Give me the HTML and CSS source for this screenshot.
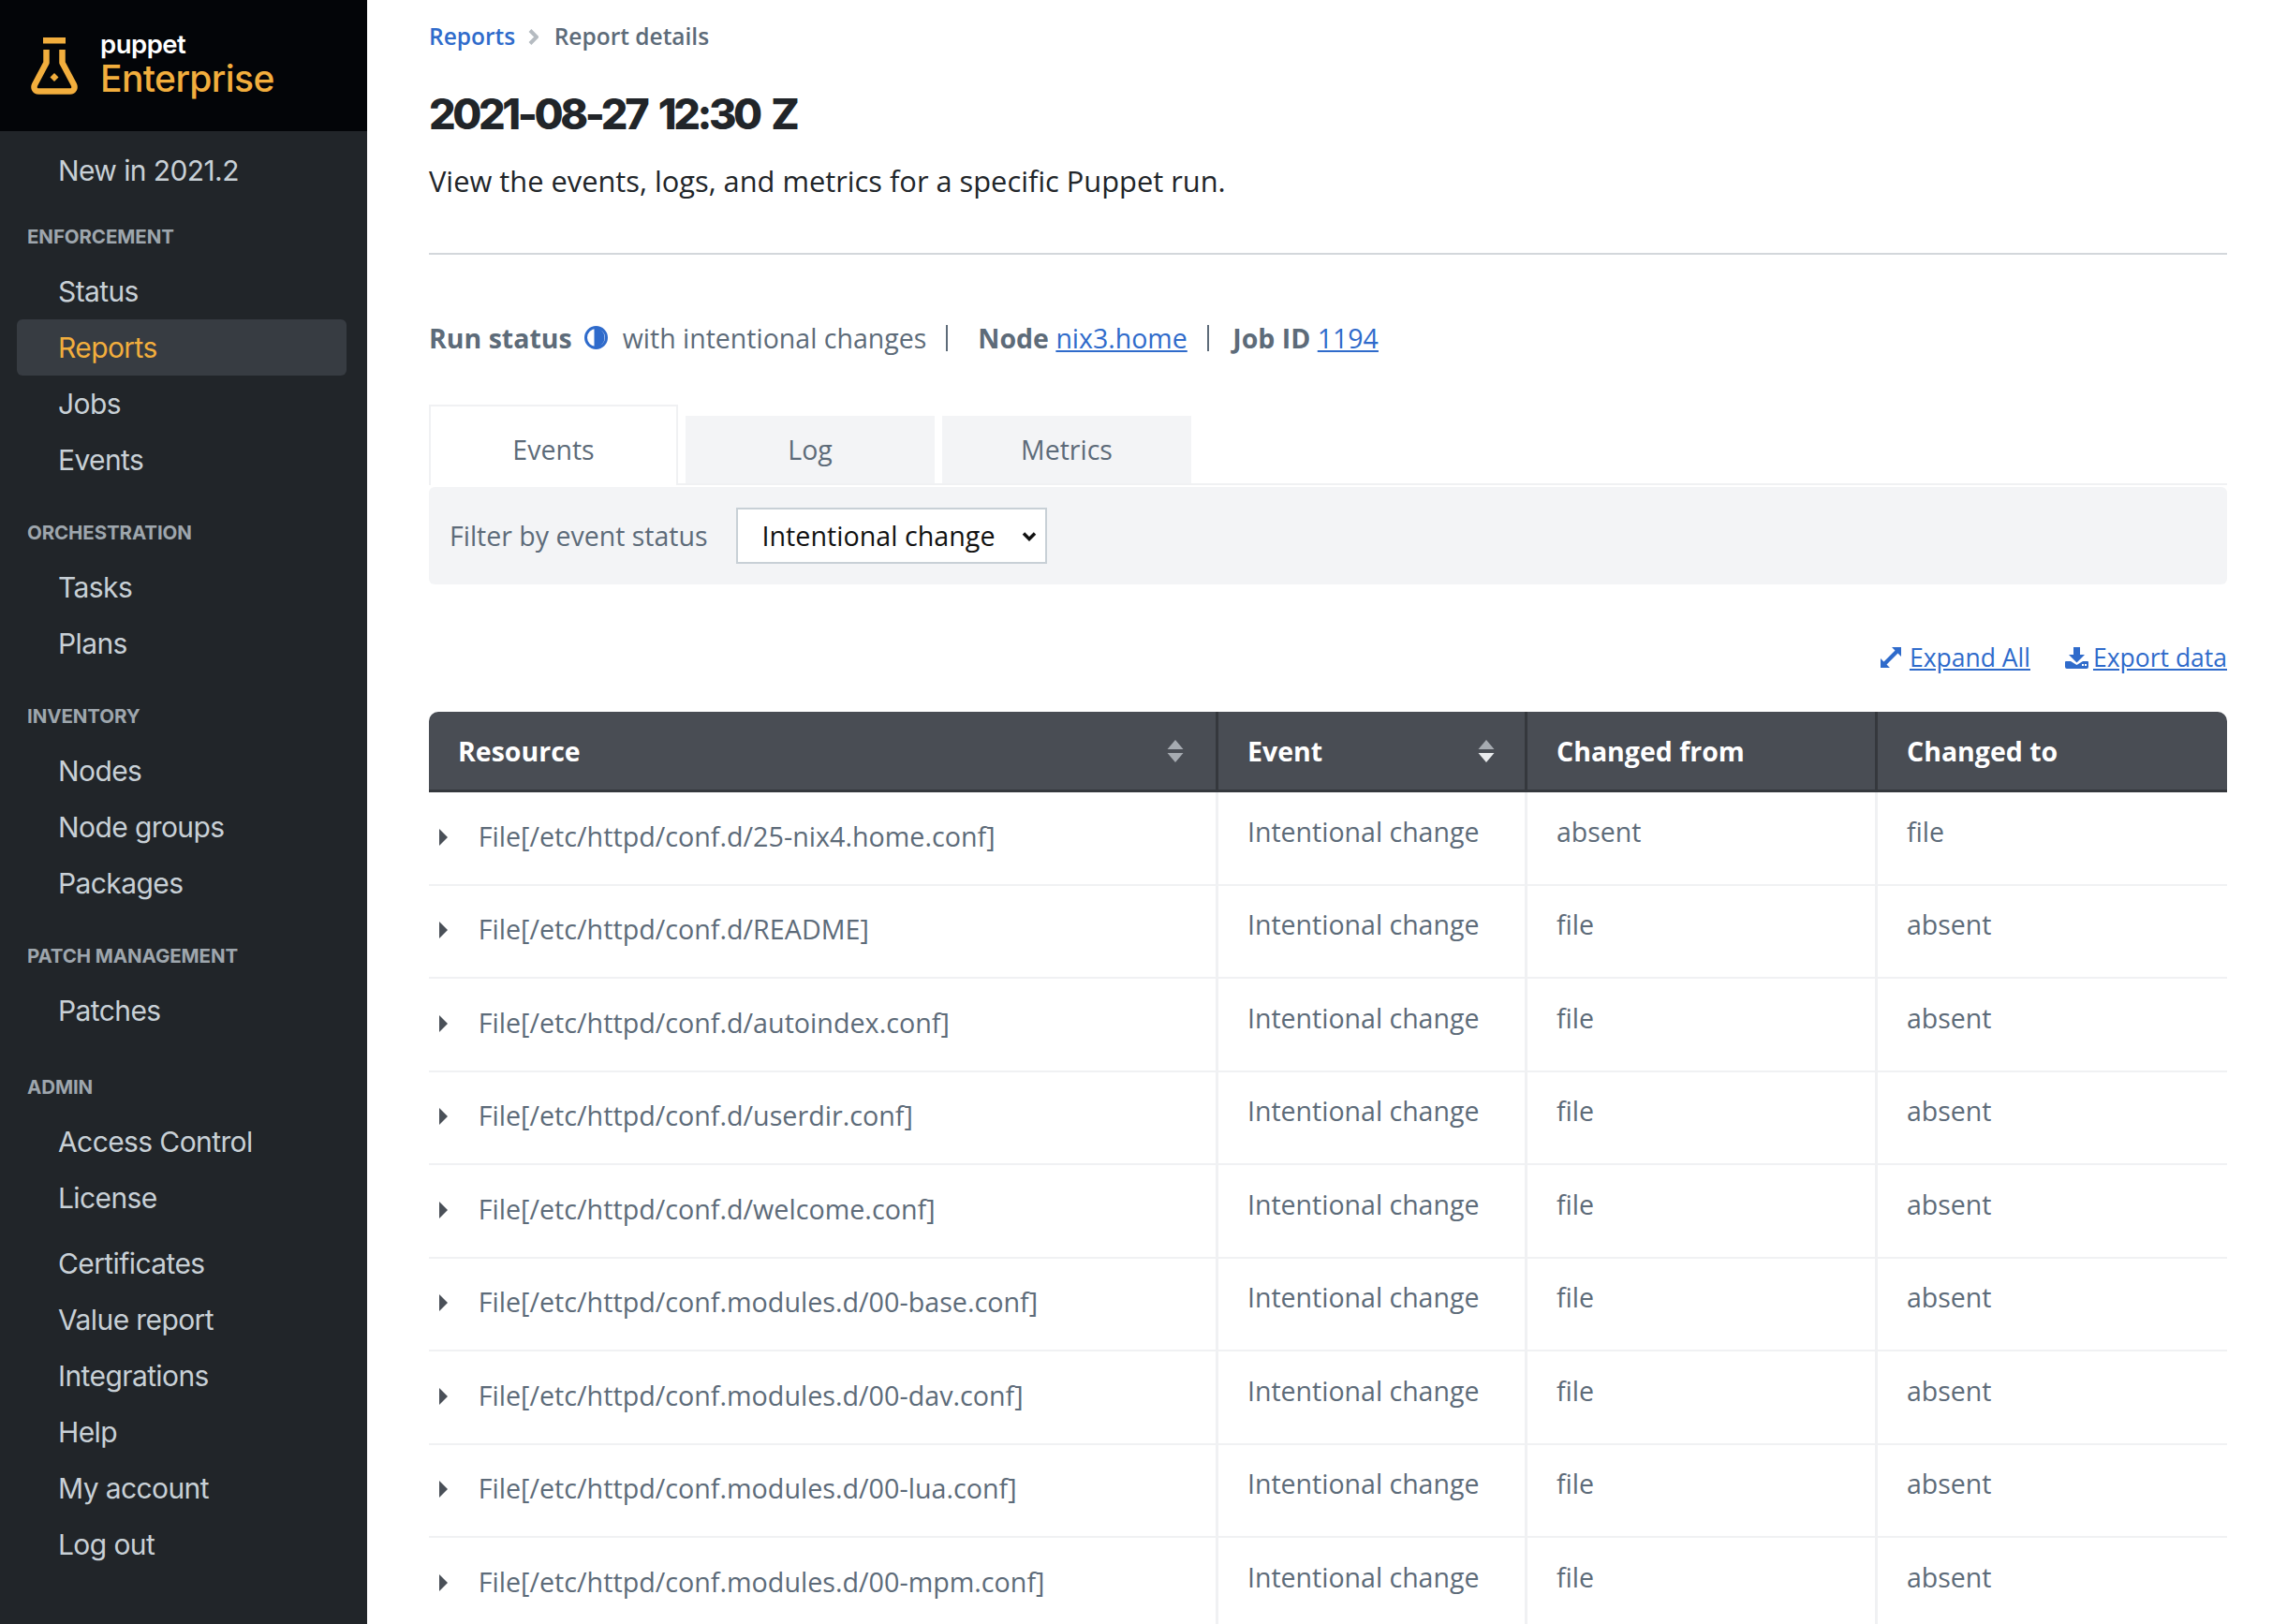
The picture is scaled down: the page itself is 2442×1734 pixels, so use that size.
FILE: index.html
```html
<!DOCTYPE html>
<html lang="en">
<head>
<meta charset="utf-8">
<title>Report details</title>
<link rel="stylesheet" href="styles.css">
</head>
<body>
<div class="app">
  <aside class="sidebar">
    <div class="brand">
      <svg class="flask" width="50" height="61" viewBox="0 0 50 61">
        <path fill="#f2ae3d" d="M13 0h24v6.500H13z"/>
        <path fill="none" stroke="#f2ae3d" stroke-width="6.500" stroke-linejoin="round" d="M16.500 13v14L4.300 50c-2 4 0 7.500 4 7.500h33.400c4 0 6-3.500 4-7.500L33.500 27V13"/>
        <path fill="#f2ae3d" d="M25 38l4.500 4.500-4.500 4.500-4.500-4.500z"/>
      </svg>
      <div class="brand-text">
        <div class="brand-top">puppet</div>
        <div class="brand-name">Enterprise</div>
      </div>
    </div>
    <nav class="nav">
      <a class="nav-item">New in 2021.2</a>
      <div class="nav-head first">ENFORCEMENT</div>
      <a class="nav-item">Status</a>
      <a class="nav-item active">Reports</a>
      <a class="nav-item">Jobs</a>
      <a class="nav-item">Events</a>
      <div class="nav-head">ORCHESTRATION</div>
      <a class="nav-item">Tasks</a>
      <a class="nav-item">Plans</a>
      <div class="nav-head">INVENTORY</div>
      <a class="nav-item">Nodes</a>
      <a class="nav-item">Node groups</a>
      <a class="nav-item">Packages</a>
      <div class="nav-head">PATCH MANAGEMENT</div>
      <a class="nav-item">Patches</a>
      <div class="nav-head admin">ADMIN</div>
      <a class="nav-item">Access Control</a>
      <a class="nav-item">License</a>
      <a class="nav-item spaced">Certificates</a>
      <a class="nav-item">Value report</a>
      <a class="nav-item">Integrations</a>
      <a class="nav-item">Help</a>
      <a class="nav-item">My account</a>
      <a class="nav-item">Log out</a>
    </nav>
  </aside>
  <main class="main">
    <div class="crumbs">
      <a class="crumb-link">Reports</a>
      <svg class="crumb-sep" width="11" height="17" viewBox="0 0 11 17"><path fill="none" stroke="#b5bbc1" stroke-width="4" d="M2 1.500l7 7-7 7"/></svg>
      <span class="crumb-current">Report details</span>
    </div>
    <h1 class="title">2021-08-27 12:30 Z</h1>
    <p class="lead">View the events, logs, and metrics for a specific Puppet run.</p>
    <hr class="rule">
    <div class="status">
      <b>Run status</b>
      <svg class="half" width="25" height="25" viewBox="0 0 25 25"><circle cx="12.500" cy="12.500" r="11" fill="#fff" stroke="#2f6bcb" stroke-width="3"/><path fill="#2f6bcb" d="M10.500 1.500a11 11 0 0 1 0 22z"/></svg>
      <span class="status-text">with intentional changes</span>
      <span class="pipe"></span>
      <b class="node">Node</b>&nbsp;<a class="link">nix3.home</a>
      <span class="pipe"></span>
      <b class="job">Job ID</b>&nbsp;<a class="link">1194</a>
    </div>
    <div class="tabs">
      <div class="tab current">Events</div>
      <div class="tab">Log</div>
      <div class="tab">Metrics</div>
    </div>
    <div class="filter">
      <label class="filter-label" for="st">Filter by event status</label>
      <div class="select-wrap">
        <select class="filter-select" id="st"><option>Intentional change</option></select>
        <svg class="select-arrow" width="16" height="12" viewBox="0 0 16 12"><path fill="none" stroke="#111" stroke-width="3.500" d="M2 2.500l6 6 6-6"/></svg>
      </div>
    </div>
    <div class="actions">
      <a class="action">
        <svg width="24" height="24" viewBox="0 0 24 24"><g fill="#2f6bcb"><path d="M13 1h10v10l-3.500-3.500L7.500 19.500 11 23H1V13l3.500 3.500 12-12z"/></g></svg>
        <span>Expand All</span>
      </a>
      <a class="action tight">
        <svg width="25" height="24" viewBox="0 0 25 24"><path fill="#2f6bcb" d="M9 1h7v8h5l-8.500 8.500L4 9h5zM1 16h5l6.500 4 6.500-4h5a1 1 0 0 1 1 1v5a2 2 0 0 1-2 2H2a2 2 0 0 1-2-2v-5a1 1 0 0 1 1-1z"/><path fill="#fff" d="M18 19h2v2h-2zM21 19h2v2h-2z"/></svg>
        <span>Export data</span>
      </a>
    </div>
    <table class="grid">
      <colgroup><col class="c1"><col class="c2"><col class="c3"><col class="c4"></colgroup>
      <thead>
        <tr>
          <th><div class="th-flex">Resource<svg class="sort" width="18" height="24" viewBox="0 0 18 24"><path fill="#a6abb1" d="M9 0l8.500 10H.5zM9 24L.5 14h17z"/></svg></div></th>
          <th><div class="th-flex">Event<svg class="sort sort-b" width="18" height="24" viewBox="0 0 18 24"><path fill="#a6abb1" d="M9 0l8.500 10H.5z"/><path fill="#e9ebed" d="M9 24L.5 14h17z"/></svg></div></th>
          <th>Changed from</th>
          <th>Changed to</th>
        </tr>
      </thead>
      <tbody>
        <tr><td class="res"><svg class="caret" width="9" height="18" viewBox="0 0 9 18"><path fill="#4a5058" d="M0 0l9 9-9 9z"/></svg>File[/etc/httpd/conf.d/25-nix4.home.conf]</td><td>Intentional change</td><td>absent</td><td>file</td></tr>
        <tr><td class="res"><svg class="caret" width="9" height="18" viewBox="0 0 9 18"><path fill="#4a5058" d="M0 0l9 9-9 9z"/></svg>File[/etc/httpd/conf.d/README]</td><td>Intentional change</td><td>file</td><td>absent</td></tr>
        <tr><td class="res"><svg class="caret" width="9" height="18" viewBox="0 0 9 18"><path fill="#4a5058" d="M0 0l9 9-9 9z"/></svg>File[/etc/httpd/conf.d/autoindex.conf]</td><td>Intentional change</td><td>file</td><td>absent</td></tr>
        <tr><td class="res"><svg class="caret" width="9" height="18" viewBox="0 0 9 18"><path fill="#4a5058" d="M0 0l9 9-9 9z"/></svg>File[/etc/httpd/conf.d/userdir.conf]</td><td>Intentional change</td><td>file</td><td>absent</td></tr>
        <tr><td class="res"><svg class="caret" width="9" height="18" viewBox="0 0 9 18"><path fill="#4a5058" d="M0 0l9 9-9 9z"/></svg>File[/etc/httpd/conf.d/welcome.conf]</td><td>Intentional change</td><td>file</td><td>absent</td></tr>
        <tr><td class="res"><svg class="caret" width="9" height="18" viewBox="0 0 9 18"><path fill="#4a5058" d="M0 0l9 9-9 9z"/></svg>File[/etc/httpd/conf.modules.d/00-base.conf]</td><td>Intentional change</td><td>file</td><td>absent</td></tr>
        <tr><td class="res"><svg class="caret" width="9" height="18" viewBox="0 0 9 18"><path fill="#4a5058" d="M0 0l9 9-9 9z"/></svg>File[/etc/httpd/conf.modules.d/00-dav.conf]</td><td>Intentional change</td><td>file</td><td>absent</td></tr>
        <tr><td class="res"><svg class="caret" width="9" height="18" viewBox="0 0 9 18"><path fill="#4a5058" d="M0 0l9 9-9 9z"/></svg>File[/etc/httpd/conf.modules.d/00-lua.conf]</td><td>Intentional change</td><td>file</td><td>absent</td></tr>
        <tr><td class="res"><svg class="caret" width="9" height="18" viewBox="0 0 9 18"><path fill="#4a5058" d="M0 0l9 9-9 9z"/></svg>File[/etc/httpd/conf.modules.d/00-mpm.conf]</td><td>Intentional change</td><td>file</td><td>absent</td></tr>
      </tbody>
    </table>
  </main>
</div>
</body>
</html>
```
FILE: styles.css
```css
* { box-sizing: border-box; }
html, body { margin: 0; height: 100%; overflow: hidden; background: #fff; }
body { font-family: "Open Sans", "Liberation Sans", sans-serif; color: #1f2428; }
.app { display: flex; height: 1734px; }
.sidebar { width: 392px; flex: none; background: #212529; font-family: Inter, "Liberation Sans", sans-serif; }
.brand { height: 140px; background: #030508; display: flex; align-items: center; padding: 0 0 0 33px; gap: 24px; }
.brand-text { margin-top: -2px; }
.brand-top { color: #fff; font-size: 27.500px; font-weight: 600; line-height: 30px; letter-spacing: -0.5px; }
.brand-name { color: #f2ae3d; font-size: 39px; font-weight: 500; line-height: 44px; letter-spacing: -0.6px; }
.nav { display: flex; flex-direction: column; padding: 12px 22px 0 18px; }
.nav-item { display: block; height: 60px; line-height: 60px; padding-left: 44px; font-size: 30px; color: #c8d0d6; border-radius: 6px; letter-spacing: -0.600px; }
.nav-item.active { background: #373c42; color: #f2ae3d; }
.nav-item.spaced { margin-top: 10px; }
.nav-head { height: 20px; line-height: 20px; margin: 38px 0 18px 11px; font-size: 20.500px; font-weight: 700; color: #9ea6ad; letter-spacing: -0.1px; }
.nav-head.first { margin-top: 31px; }
.nav-head.admin { margin-top: 42px; }
.main { flex: 1; padding: 0 64px 0 66px; min-width: 0; }
.crumbs { display: flex; align-items: center; height: 77px; font-size: 24.500px; font-weight: 600; }
.crumb-link { color: #2f6bcb; }
.crumb-sep { margin: 2px 17px 0 13.500px; }
.crumb-current { color: #5d6b79; }
.title { margin: 17px 0 0; font-family: Inter, "Liberation Sans", sans-serif; font-size: 45px; font-weight: 800; line-height: 56px; color: #212529; letter-spacing: -3.400px; word-spacing: 6px; }
.lead { margin: 20.500px 0 0; font-size: 30.800px; line-height: 44px; color: #212529; }
.rule { border: 0; height: 2px; background: #d3d7db; margin: 55.500px 0 0; }
.status { display: flex; align-items: center; margin-top: 66.500px; height: 44px; font-size: 28.500px; color: #5d6b79; }
.status b { font-weight: 700; }
.status b.node { margin-left: 5px; }
.status b.job { margin-left: -1.500px; }
.half { margin: 0 16px 0 13px; }
.status-text { white-space: pre; }
.pipe { width: 2px; height: 28px; background: #5d6b79; margin: 0 27px 0 21px; }
.link { color: #2f6bcb; text-decoration: underline; }
.tabs { display: flex; align-items: flex-end; margin-top: 47.500px; gap: 8px; border-bottom: 2px solid #f0f1f3; height: 88px; }
.tab { width: 266px; height: 72px; display: flex; align-items: center; justify-content: center; background: #f3f4f6; font-size: 28.500px; color: #5d6b79; }
.tab.current { height: 86px; background: #fff; border: 2px solid #f0f1f3; border-bottom: 0; margin-bottom: -2px; padding-top: 8px; }
.filter { display: flex; align-items: center; gap: 30px; height: 104px; margin-top: 1.500px; padding: 0 22px; background: #f3f4f6; border-radius: 6px; }
.filter-label { font-size: 28.500px; color: #5d6b79; }
.select-wrap { position: relative; display: flex; }
.filter-select { appearance: none; width: 332px; height: 60px; padding: 0 0 0 26px; background: #fff; border: 2px solid #c8d0d6; border-radius: 0; font-family: "Open Sans", sans-serif; font-size: 28.700px; color: #111; }
.select-arrow { position: absolute; right: 11px; top: 25px; pointer-events: none; }
.actions { display: flex; justify-content: flex-end; gap: 37px; margin-top: 56.500px; height: 44px; font-size: 26.500px; color: #2f6bcb; }
.action { display: flex; align-items: center; gap: 8px; }
.action.tight { gap: 5px; }
.action span { text-decoration: underline; }
.grid { width: 100%; margin-top: 36px; border-collapse: separate; border-spacing: 0; table-layout: fixed; }
.c1 { width: 843px; }
.c2 { width: 330px; }
.c3 { width: 374px; }
.grid th { height: 86px; padding: 0 30px 0 31px; background: #494d54; border-bottom: 3px solid #35383d; border-right: 3px solid #35383d; color: #fff; font-size: 28.500px; font-weight: 700; text-align: left; }
.grid th:first-child { border-top-left-radius: 10px; }
.grid th:last-child { border-top-right-radius: 10px; border-right: 0; }
.th-flex { display: flex; align-items: center; justify-content: space-between; padding-right: 4px; }
.sort-b { margin-right: -2px; }
.grid td { height: 99.500px; padding: 21.500px 30px 0 31px; vertical-align: top; font-size: 28.500px; line-height: 40px; color: #5d6b79; border-bottom: 2px solid #f0f1f3; border-right: 3px solid #f0f1f3; }
.grid td:last-child { border-right: 0; }
.grid td.res { padding: 26.500px 0 0 11px; font-size: 28.700px; }
.caret { margin: 0 32.700px 0 0; vertical-align: 1px; }
```
